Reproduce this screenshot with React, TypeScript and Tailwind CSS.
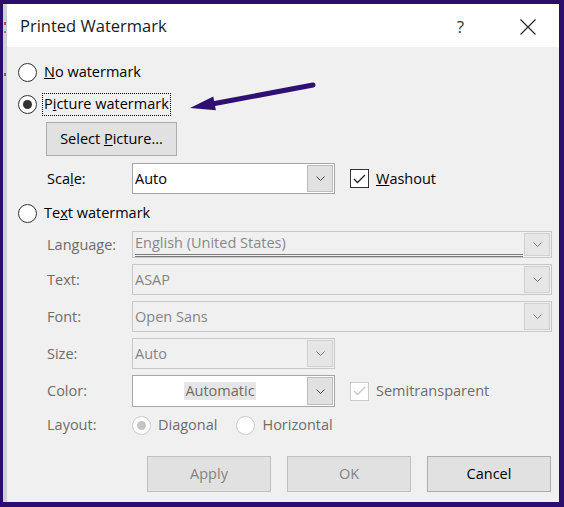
import React from "react";

const Chevron = ({ color = "#444444" }: { color?: string }) => (
  <svg width="9" height="5" viewBox="0 0 9 5">
    <path d="M0.5 0.5 L4.5 4.5 L8.5 0.5" fill="none" stroke={color} strokeWidth="1" />
  </svg>
);

const Radio = ({ checked = false, disabled = false }: { checked?: boolean; disabled?: boolean }) => (
  <span
    className={`w-[19px] h-[19px] rounded-full border bg-white flex items-center justify-center shrink-0 ${
      disabled ? "border-[#cccccc]" : "border-[#333333]"
    }`}
  >
    {checked && <span className={`w-[9px] h-[9px] rounded-full ${disabled ? "bg-[#c4c4c4]" : "bg-[#333333]"}`} />}
  </span>
);

const Check = ({ disabled = false }: { disabled?: boolean }) => (
  <span
    className={`w-[19px] h-[19px] border bg-white flex items-center justify-center shrink-0 ${
      disabled ? "border-[#cccccc]" : "border-[#333333]"
    }`}
  >
    <svg width="13" height="10" viewBox="0 0 13 10">
      <path d="M1 5 L4.5 8.5 L12 1" fill="none" stroke={disabled ? "#c6c6c6" : "#222222"} strokeWidth="1.3" />
    </svg>
  </span>
);

type ComboProps = {
  width: string;
  height: string;
  value: string;
  disabled?: boolean;
  white?: boolean;
  center?: boolean;
  underline?: boolean;
};

const Combo = ({ width, height, value, disabled, white, center, underline }: ComboProps) => (
  <div
    className={`${width} ${height} flex border ${disabled ? "border-[#c8c8c8]" : "border-[#a5a5a5]"} ${
      white ? "bg-white" : "bg-[#f0f0f0]"
    }`}
  >
    <div className={`flex-1 flex items-center ${center ? "justify-center" : "pl-[2px]"}`}>
      {underline ? (
        <span className="w-full h-full flex items-center border-b-[3px] border-double border-[#7a7a7a] text-[#888888] mr-[1px]">
          {value}
        </span>
      ) : center ? (
        <span className="bg-[#e6e6e6] px-[1px] text-[#6d6d6d] leading-[18px]">{value}</span>
      ) : (
        <span className={disabled ? "text-[#858585]" : "text-black"}>{value}</span>
      )}
    </div>
    <div
      className={`w-[26px] my-[1px] mr-[1px] border flex items-center justify-center ${
        disabled ? "border-[#d0d0d0] bg-[#e6e6e6]" : "border-[#bcbcbc] bg-[#e1e1e1]"
      }`}
    >
      <Chevron color={disabled ? "#7a7a7a" : "#444444"} />
    </div>
  </div>
);

export default function App() {
  return (
    <div className="relative w-[564px] h-[507px] bg-[#2b0d6c] flex pt-[4px] pb-[5px] pr-[5px] pl-[3px] font-['Open_Sans',sans-serif] text-[14.5px] text-black">
      {/* window behind, peeking out on the left */}
      <div className="w-[4px] bg-[#cfcfd6] flex flex-col items-center">
        <span className="mt-[18px] w-[2px] h-[3px] bg-[#c84040]" />
        <span className="mt-[6px] w-[2px] h-[2px] bg-[#d06060]" />
        <span className="mt-[40px] w-[2px] h-[3px] bg-[#c84040]" />
      </div>

      <div className="flex-1 flex flex-col bg-[#f0f0f0]">
        {/* Title bar */}
        <div className="h-[43px] bg-white flex items-center pl-[13px] pr-[23px] pt-[2px]">
          <span className="text-[16.5px] text-[#1a1a1a]">Printed Watermark</span>
          <span className="flex-1" />
          <span className="text-[17px] text-[#333333]">?</span>
          <svg className="ml-[56px]" width="16" height="16" viewBox="0 0 16 16">
            <path d="M0.5 0.5 L15.5 15.5 M15.5 0.5 L0.5 15.5" stroke="#222222" strokeWidth="1.1" />
          </svg>
        </div>

        <div className="flex flex-col pl-[11px]">
          <div className="mt-[15px] h-[20px] flex items-center">
            <Radio />
            <span className="ml-[7px]">
              <span className="underline">N</span>o watermark
            </span>
          </div>

          <div className="mt-[12px] h-[20px] flex items-center">
            <Radio checked />
            <span className="ml-[5px] h-[23px] px-[1px] flex items-center border border-dotted border-black">
              <span>
                P<span className="underline">i</span>cture watermark
              </span>
            </span>
          </div>

          <button className="mt-[8px] ml-[28px] w-[131px] h-[34px] bg-[#e1e1e1] border border-[#adadad] flex items-center justify-center">
            <span>
              Select <span className="underline">P</span>icture...
            </span>
          </button>

          <div className="mt-[7px] h-[31px] flex items-center">
            <span className="ml-[29px] w-[85px]">
              Sca<span className="underline">l</span>e:
            </span>
            <Combo width="w-[203px]" height="h-[31px]" value="Auto" white />
            <span className="ml-[15px]">
              <Check />
            </span>
            <span className="ml-[7px]">
              <span className="underline">W</span>ashout
            </span>
          </div>

          <div className="mt-[9px] h-[20px] flex items-center">
            <Radio />
            <span className="ml-[7px]">
              Te<span className="underline">x</span>t watermark
            </span>
          </div>

          <div className="mt-[8px] h-[27px] flex items-center text-[#6d6d6d]">
            <span className="ml-[29px] w-[85px]">Language:</span>
            <Combo width="w-[420px]" height="h-[27px]" value="English (United States)" disabled underline />
          </div>

          <div className="mt-[6px] h-[31px] flex items-center text-[#6d6d6d]">
            <span className="ml-[29px] w-[85px]">Text:</span>
            <Combo width="w-[420px]" height="h-[31px]" value="ASAP" disabled />
          </div>

          <div className="mt-[6px] h-[31px] flex items-center text-[#6d6d6d]">
            <span className="ml-[29px] w-[85px]">Font:</span>
            <Combo width="w-[420px]" height="h-[31px]" value="Open Sans" disabled />
          </div>

          <div className="mt-[6px] h-[31px] flex items-center text-[#6d6d6d]">
            <span className="ml-[29px] w-[85px]">Size:</span>
            <Combo width="w-[203px]" height="h-[31px]" value="Auto" disabled />
          </div>

          <div className="mt-[6px] h-[32px] flex items-center text-[#6d6d6d]">
            <span className="ml-[29px] w-[85px]">Color:</span>
            <Combo width="w-[203px]" height="h-[32px]" value="Automatic" white center />
            <span className="ml-[15px]">
              <Check disabled />
            </span>
            <span className="ml-[7px]">Semitransparent</span>
          </div>

          <div className="mt-[9px] h-[18px] flex items-center text-[#6d6d6d]">
            <span className="ml-[29px] w-[85px]">Layout:</span>
            <Radio checked disabled />
            <span className="ml-[7px]">Diagonal</span>
            <span className="ml-[19px]">
              <Radio disabled />
            </span>
            <span className="ml-[7px]">Horizontal</span>
          </div>

          <div className="mt-[22px] h-[36px] flex justify-end gap-[16px] pr-[8px]">
            <button className="w-[124px] h-[36px] bg-[#e1e1e1] border border-[#bfbfbf] text-[#838383]">Apply</button>
            <button className="w-[124px] h-[36px] bg-[#e1e1e1] border border-[#bfbfbf] text-[#838383]">OK</button>
            <button className="w-[124px] h-[36px] bg-[#e1e1e1] border border-[#adadad] text-black">Cancel</button>
          </div>
        </div>
      </div>

      {/* annotation arrow */}
      <svg className="absolute left-[180px] top-[78px]" width="145" height="40" viewBox="180 78 145 40">
        <path d="M313 85 L212 104" stroke="#2e0f72" strokeWidth="5" strokeLinecap="round" />
        <path d="M190 108 L213.3 96.5 L215.9 110.3 Z" fill="#2e0f72" />
      </svg>
    </div>
  );
}
